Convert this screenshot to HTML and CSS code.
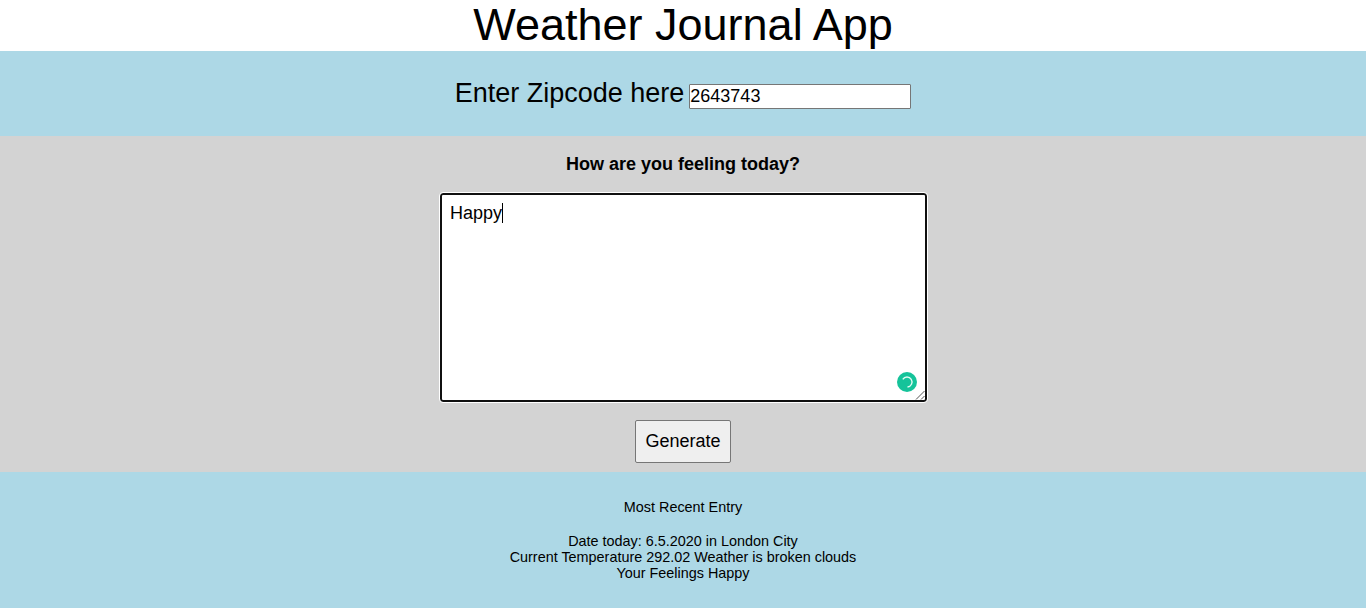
FILE: index.html
```html
<!DOCTYPE html>
<html lang="en">
<head>
<meta charset="utf-8">
<title>Weather Journal App</title>
<link rel="stylesheet" href="styles.css">
</head>
<body>
<div class="app">
  <header class="headline">Weather Journal App</header>
  <section class="zip">
    <label class="zip-label" for="zip">Enter Zipcode here</label>
    <input class="zip-input" type="text" id="zip" value="2643743">
  </section>
  <section class="feel">
    <label class="feel-label" for="feelings">How are you feeling today?</label>
    <div class="feel-box">
      <div class="feel-text" id="feelings"><span class="typed">Happy</span></div>
      <svg class="badge" viewBox="0 0 20 20"><circle cx="10" cy="10" r="10" fill="#15c39a"/><path d="M5.8 7.3A5 5 0 1 1 10.5 15" fill="none" stroke="#e0faf2" stroke-width="1.4"/></svg>
      <svg class="grip" viewBox="0 0 10 10"><path d="M1 9.5L9.5 1M6 9.5L9.5 6" stroke="#555" fill="none"/></svg>
    </div>
    <button class="generate" type="submit">Generate</button>
  </section>
  <section class="entry">
    <div class="entry-title">Most Recent Entry</div>
    <div>Date today: 6.5.2020 in London City</div>
    <div>Current Temperature 292.02 Weather is broken clouds</div>
    <div>Your Feelings Happy</div>
  </section>
</div>
</body>
</html>
```
FILE: styles.css
```css
* { box-sizing: border-box; }
body { margin: 0; background: #fff; color: #000; font-family: "Liberation Sans", Arial, sans-serif; }
.app { display: flex; flex-direction: column; height: 608px; }
.headline { height: 51px; font-size: 45px; line-height: 49px; text-align: center; }
.zip { height: 85px; background: lightblue; display: flex; justify-content: center; align-items: flex-start; gap: 5px; padding-top: 27px; }
.zip-label { font-size: 27px; line-height: 31px; }
.zip-input { width: 222px; height: 25px; margin-top: 6px; padding: 1px 0; border: 1px solid #767676; border-radius: 1px; font: 18px "Liberation Sans", Arial, sans-serif; }
.feel { height: 336px; background: lightgray; display: flex; flex-direction: column; align-items: center; padding-top: 18px; }
.feel-label { font-size: 18px; font-weight: bold; line-height: 21px; }
.feel-box { position: relative; width: 487px; height: 209px; margin: 18px 0 18px 1px; border: 2px solid #101010; border-radius: 3px; background: #fff; padding: 8px; outline: 1px solid #fff; }
.feel-text { font-size: 18px; line-height: 20px; }
.typed { display: inline-block; border-right: 1px solid #000; }
.badge { position: absolute; right: 8px; bottom: 8px; width: 20px; height: 20px; }
.grip { position: absolute; right: 0; bottom: 0; width: 10px; height: 10px; }
.generate { width: 96px; height: 43px; padding: 0; border: 1px solid #767676; border-radius: 2px; background: #efefef; color: #000; font: 18px "Liberation Sans", Arial, sans-serif; }
.entry { flex: 1; background: lightblue; padding-top: 27px; text-align: center; font-size: 14.4px; line-height: 16px; }
.entry-title { margin-bottom: 18px; }
```
